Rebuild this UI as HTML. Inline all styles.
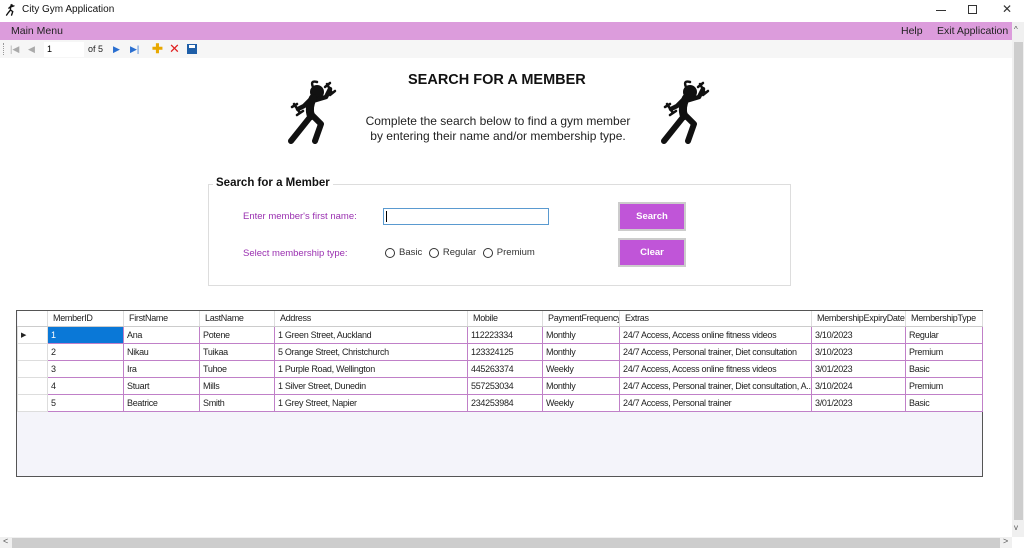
<!DOCTYPE html>
<html><head><style>
*{box-sizing:border-box;margin:0;padding:0}
body{width:1024px;height:548px;overflow:hidden;background:#fff;font-family:"Liberation Sans",sans-serif;position:relative}
.a{position:absolute}
.seg{font-family:"Liberation Sans",sans-serif}
table{border-collapse:collapse;font-size:9px;letter-spacing:-0.3px;color:#222}
td{height:17px;padding:0 3px;white-space:nowrap;overflow:hidden;border:1px solid #c080c8;background:#fff}
th{height:15px;font-weight:normal;text-align:left;padding:0 5px;border-right:1px solid #ddd;border-bottom:1px solid #ccc;background:#fff;white-space:nowrap;overflow:hidden}
</style></head><body>
<svg class="a" style="left:5px;top:3px" width="12" height="13" viewBox="0 0 62 66"><g stroke="#111" fill="none" stroke-linecap="round"><circle cx="34" cy="11" r="6" fill="#111"/><path d="M30 17 L20 26 M33 19 L46 14 M29 18 L28 36 L18 48 L8 62 M29 36 L40 44 L34 62" stroke-width="7"/></g></svg>
<div class="a seg" style="left:22px;top:4px;font-size:10px;color:#111">City Gym Application</div>
<div class="a" style="left:936px;top:10px;width:10px;height:1px;background:#333"></div>
<div class="a" style="left:968px;top:5px;width:9px;height:9px;border:1px solid #333"></div>
<div class="a" style="left:1002px;top:2px;font-size:12px;color:#333">✕</div>
<div class="a" style="left:0;top:22px;width:1012px;height:18px;background:#dc9cdc"></div>
<div class="a seg" style="left:11px;top:25px;font-size:10.5px;color:#222">Main Menu</div>
<div class="a seg" style="left:901px;top:25px;font-size:10.5px;color:#222">Help</div>
<div class="a seg" style="left:937px;top:25px;font-size:10.5px;color:#222">Exit Application</div>
<div class="a" style="left:0;top:40px;width:1012px;height:18px;background:#f6f6f6"></div>
<div class="a" style="left:3px;top:43px;width:1px;height:12px;border-left:1px dotted #999"></div>
<div class="a" style="left:10px;top:44px;font-size:9px;color:#aaa">|◀</div>
<div class="a" style="left:28px;top:44px;font-size:9px;color:#aaa">◀</div>
<div class="a" style="left:44px;top:42px;width:40px;height:15px;background:#fff;font-size:9px;padding:2px 3px">1</div>
<div class="a" style="left:88px;top:44px;font-size:9px;color:#222">of 5</div>
<div class="a" style="left:113px;top:44px;font-size:9px;color:#2a6fd0">▶</div>
<div class="a" style="left:130px;top:44px;font-size:9px;color:#2a6fd0">▶|</div>
<div class="a" style="left:152px;top:41px;font-size:13px;color:#e8a800;font-weight:bold">✚</div>
<div class="a" style="left:169px;top:41px;font-size:13px;color:#e02020">✕</div>
<div class="a" style="left:187px;top:44px;width:10px;height:10px;background:#1f5fa8"></div>
<div class="a" style="left:189px;top:45px;width:6px;height:3px;background:#fff"></div>
<div class="a" style="left:1012px;top:22px;width:12px;height:515px;background:#f0f0f0"></div>
<div class="a" style="left:1014px;top:42px;width:9px;height:478px;background:#cdcdcd"></div>
<div class="a" style="left:1014px;top:25px;font-size:8px;color:#555">^</div>
<div class="a" style="left:1014px;top:523px;font-size:8px;color:#555">v</div>
<div class="a" style="left:0;top:537px;width:1012px;height:11px;background:#f0f0f0"></div>
<div class="a" style="left:12px;top:538px;width:988px;height:10px;background:#cdcdcd"></div>
<div class="a" style="left:3px;top:536px;font-size:9px;color:#555">&lt;</div>
<div class="a" style="left:1003px;top:536px;font-size:9px;color:#555">&gt;</div>
<div class="a seg" style="left:408px;top:72px;font-size:14.5px;font-weight:bold;color:#111">SEARCH FOR A MEMBER</div>
<div class="a seg" style="left:340px;top:114px;width:316px;text-align:center;font-size:12px;line-height:15px;color:#222">Complete the search below to find a gym member<br>by entering their name and/or membership type.</div>
<svg class="a" style="left:282px;top:80px" width="62" height="66" viewBox="0 0 62 66"><g fill="#111" stroke="#111" stroke-linecap="round" stroke-linejoin="round">
<circle cx="35" cy="12" r="6.5"/><path d="M31 7 Q28 0 35 2" stroke-width="2.5" fill="none"/>
<path d="M30 18 L22 26 L16 29" stroke-width="4.5" fill="none"/><path d="M34 20 L44 17 L48 9" stroke-width="4.5" fill="none"/>
<path d="M31 18 Q26 28 29 36" stroke-width="8" fill="none"/>
<path d="M29 36 L21 46 L9 61" stroke-width="6" fill="none"/><path d="M30 35 L39 44 L33 61" stroke-width="6" fill="none"/>
<path d="M12 24 L18 33 M10 27 L15 24 M15 35 L21 31 M45 4 L50 13 M43 7 L48 3 M48 15 L53 11" stroke-width="2.5" fill="none"/></g></svg>
<svg class="a" style="left:655px;top:80px" width="62" height="66" viewBox="0 0 62 66"><g fill="#111" stroke="#111" stroke-linecap="round" stroke-linejoin="round">
<circle cx="35" cy="12" r="6.5"/><path d="M31 7 Q28 0 35 2" stroke-width="2.5" fill="none"/>
<path d="M30 18 L22 26 L16 29" stroke-width="4.5" fill="none"/><path d="M34 20 L44 17 L48 9" stroke-width="4.5" fill="none"/>
<path d="M31 18 Q26 28 29 36" stroke-width="8" fill="none"/>
<path d="M29 36 L21 46 L9 61" stroke-width="6" fill="none"/><path d="M30 35 L39 44 L33 61" stroke-width="6" fill="none"/>
<path d="M12 24 L18 33 M10 27 L15 24 M15 35 L21 31 M45 4 L50 13 M43 7 L48 3 M48 15 L53 11" stroke-width="2.5" fill="none"/></g></svg>
<div class="a" style="left:208px;top:184px;width:583px;height:102px;border:1px solid #ddd"></div>
<div class="a seg" style="left:213px;top:177px;background:#fff;padding:0 3px;font-size:11.5px;font-weight:bold;color:#111">Search for a Member</div>
<div class="a seg" style="left:243px;top:211px;font-size:9.5px;color:#9a30b0">Enter member's first name:</div>
<div class="a" style="left:383px;top:208px;width:166px;height:17px;border:1px solid #5a9ad0"></div>
<div class="a" style="left:386px;top:211px;width:1px;height:11px;background:#000"></div>
<div class="a seg" style="left:243px;top:248px;font-size:9.5px;color:#9a30b0">Select membership type:</div>
<div class="a seg" style="left:385px;top:247px;font-size:9.5px;color:#333;display:flex;align-items:center;gap:4px">
<span style="width:10px;height:10px;border:1px solid #333;border-radius:50%;display:inline-block"></span>Basic&nbsp;
<span style="width:10px;height:10px;border:1px solid #333;border-radius:50%;display:inline-block"></span>Regular&nbsp;
<span style="width:10px;height:10px;border:1px solid #333;border-radius:50%;display:inline-block"></span>Premium</div>
<div class="a seg" style="left:618px;top:202px;width:68px;height:29px;background:#c055d8;border:2px solid #ccc;color:#fff;font-size:9.5px;font-weight:bold;text-align:center;line-height:25px">Search</div>
<div class="a seg" style="left:618px;top:238px;width:68px;height:29px;background:#c055d8;border:2px solid #ccc;color:#fff;font-size:9.5px;font-weight:bold;text-align:center;line-height:25px">Clear</div>
<div class="a" style="left:16px;top:310px;width:967px;height:167px;border:1px solid #555;background:#f4f4fa"></div>
<table class="a" style="left:17px;top:311px;table-layout:fixed;width:965px">
<colgroup><col style="width:30px"><col style="width:76px"><col style="width:76px"><col style="width:75px"><col style="width:193px"><col style="width:75px"><col style="width:77px"><col style="width:192px"><col style="width:94px"><col style="width:77px"></colgroup>
<tr><th></th><th>MemberID</th><th>FirstName</th><th>LastName</th><th>Address</th><th>Mobile</th><th>PaymentFrequency</th><th>Extras</th><th>MembershipExpiryDate</th><th>MembershipType</th></tr>
<tr><td style="border-color:#ddd;font-size:7px">▶</td><td style="background:#0a78d7;color:#fff">1</td><td>Ana</td><td>Potene</td><td>1 Green Street, Auckland</td><td>112223334</td><td>Monthly</td><td>24/7 Access, Access online fitness videos</td><td>3/10/2023</td><td>Regular</td></tr>
<tr><td style="border-color:#ddd"></td><td>2</td><td>Nikau</td><td>Tuikaa</td><td>5 Orange Street, Christchurch</td><td>123324125</td><td>Monthly</td><td>24/7 Access, Personal trainer, Diet consultation</td><td>3/10/2023</td><td>Premium</td></tr>
<tr><td style="border-color:#ddd"></td><td>3</td><td>Ira</td><td>Tuhoe</td><td>1 Purple Road, Wellington</td><td>445263374</td><td>Weekly</td><td>24/7 Access, Access online fitness videos</td><td>3/01/2023</td><td>Basic</td></tr>
<tr><td style="border-color:#ddd"></td><td>4</td><td>Stuart</td><td>Mills</td><td>1 Silver Street, Dunedin</td><td>557253034</td><td>Monthly</td><td>24/7 Access, Personal trainer, Diet consultation, A...</td><td>3/10/2024</td><td>Premium</td></tr>
<tr><td style="border-color:#ddd"></td><td>5</td><td>Beatrice</td><td>Smith</td><td>1 Grey Street, Napier</td><td>234253984</td><td>Weekly</td><td>24/7 Access, Personal trainer</td><td>3/01/2023</td><td>Basic</td></tr>
</table>
</body></html>
